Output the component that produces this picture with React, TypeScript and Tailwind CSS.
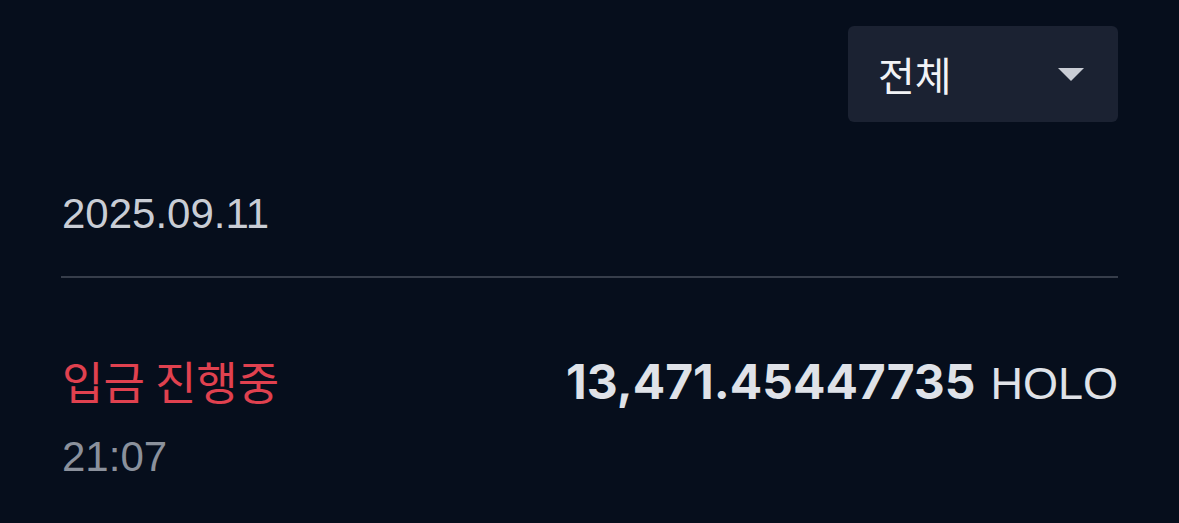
export default function App() {
  return (
    <div
      className="w-[1179px] h-[523px] bg-[#060e1c] px-[61px] overflow-hidden"
      style={{ fontFamily: '"Liberation Sans", "Noto Sans CJK KR", sans-serif' }}
    >
      <div className="flex justify-end pt-[26px]">
        <button className="w-[270px] h-[96px] rounded-[6px] bg-[#1b2232] flex items-center justify-between pl-[30px] pr-[34px]">
          <span className="text-[40px] leading-none text-[#f1f3f6]" style={{ fontFamily: '"Noto Sans CJK KR", sans-serif' }}>
            전체
          </span>
          <svg width="26" height="13" viewBox="0 0 26 13">
            <path d="M0 0 H26 L13 13 Z" fill="#c9cdd5" />
          </svg>
        </button>
      </div>

      <div className="pt-[67px] pb-[37px] pl-px text-[42px] leading-[50px] text-[#c9cdd5]">
        2025.09.11
      </div>
      <div className="h-[2px] bg-[#363d4a]" />

      <div className="flex justify-between items-start pt-[77px]">
        <div className="pl-px">
          <div className="text-[45px] leading-[52px] text-[#e0414f]" style={{ fontFamily: '"Noto Sans CJK KR", sans-serif' }}>
            입금 진행중
          </div>
          <div className="mt-[25px] text-[42px] leading-[50px] text-[#8b919c]">21:07</div>
        </div>
        <div className="flex items-baseline gap-[15px] text-[#dfe2e8] pt-[1px]">
          <span className="text-[48px] leading-[52px] font-bold" style={{ fontFamily: 'Inter, sans-serif' }}>
            13,471.45447735
          </span>
          <span className="text-[45px] leading-[52px]">HOLO</span>
        </div>
      </div>
    </div>
  );
}
